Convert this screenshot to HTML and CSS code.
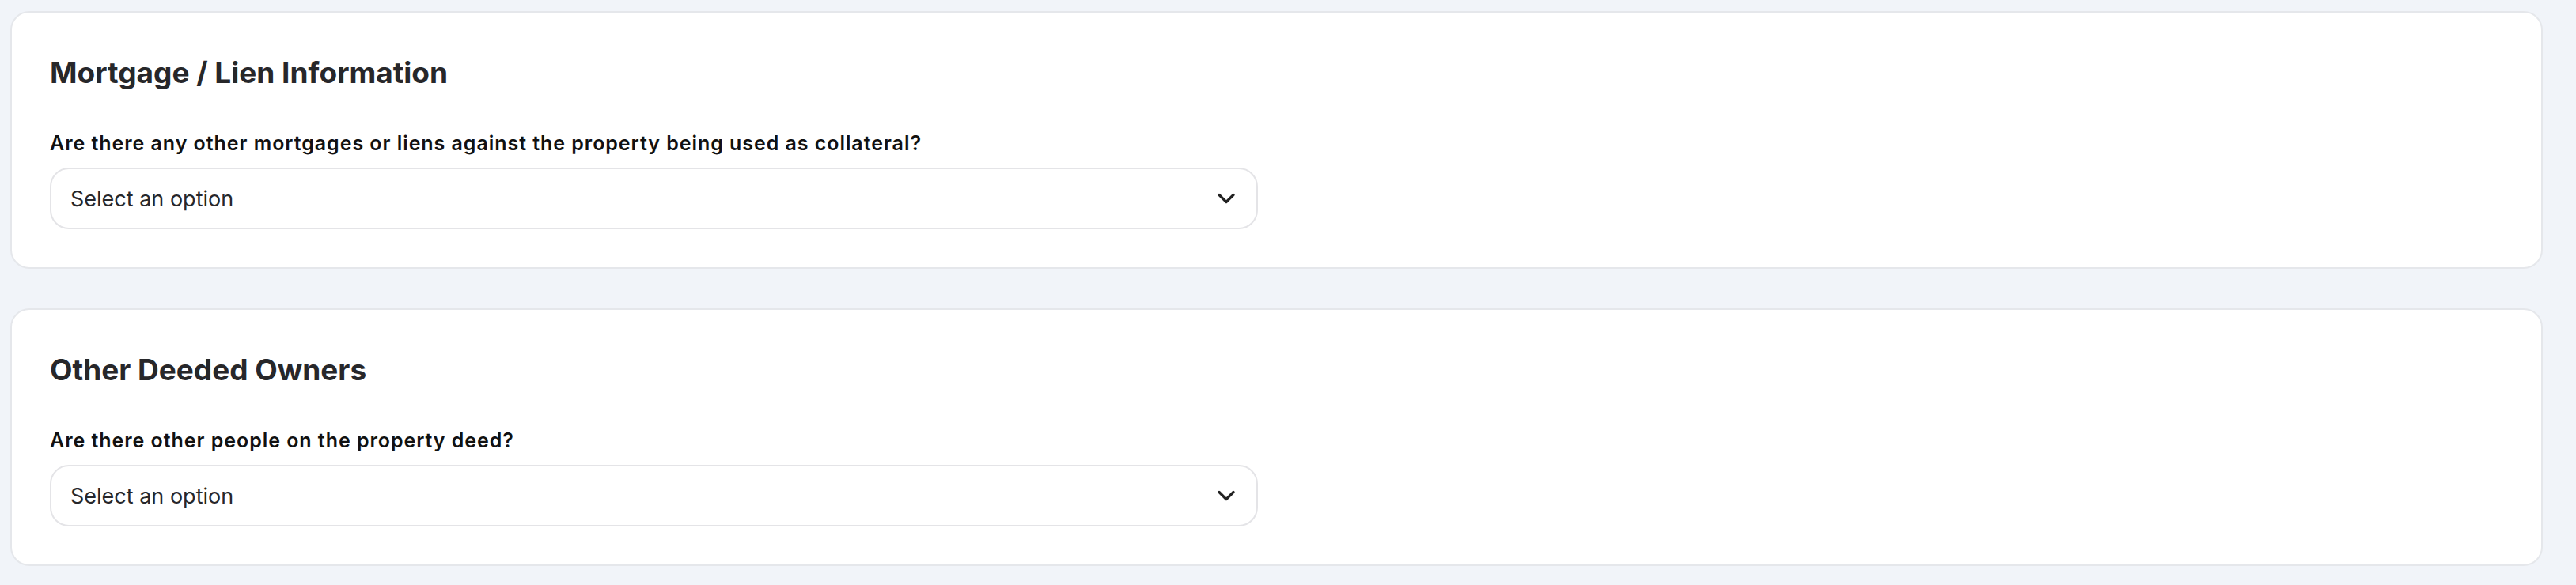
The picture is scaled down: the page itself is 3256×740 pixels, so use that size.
FILE: index.html
```html
<!DOCTYPE html>
<html>
<head>
    <title>Property Details</title>
    <link rel="stylesheet" href="styles.css">
</head>
<body>
    <div class="page">
        <section class="card">
            <h2>Mortgage / Lien Information</h2>
            <div class="form-grid">
                <div class="form-group">
                    <label for="otherLiens">Are there any other mortgages or liens against the property being used as collateral?</label>
                    <div class="select-wrap">
                        <select id="otherLiens">
                            <option value="">Select an option</option>
                            <option value="yes">Yes</option>
                            <option value="no">No</option>
                        </select>
                        <svg class="chevron" viewBox="0 0 24 24" fill="none" stroke="currentColor" stroke-width="2" stroke-linecap="round" stroke-linejoin="round"><path d="m6 9 6 6 6-6"/></svg>
                    </div>
                </div>
            </div>
        </section>

        <section class="card">
            <h2>Other Deeded Owners</h2>
            <div class="form-grid">
                <div class="form-group">
                    <label for="otherOwners">Are there other people on the property deed?</label>
                    <div class="select-wrap">
                        <select id="otherOwners">
                            <option value="">Select an option</option>
                            <option value="yes">Yes</option>
                            <option value="no">No</option>
                        </select>
                        <svg class="chevron" viewBox="0 0 24 24" fill="none" stroke="currentColor" stroke-width="2" stroke-linecap="round" stroke-linejoin="round"><path d="m6 9 6 6 6-6"/></svg>
                    </div>
                </div>
            </div>
        </section>
    </div>
</body>
</html>
```

FILE: styles.css
```css
* {
    box-sizing: border-box;
}
body {
    font-family: Inter, 'Liberation Sans', sans-serif;
    background: #f1f4f9;
    color: #27272a;
    margin: 0;
}
.page {
    display: flex;
    flex-direction: column;
    gap: 50px;
    padding: 14px 42px 16px 13px;
}
.card {
    background: #fff;
    border: 2px solid #e5e7eb;
    border-radius: 24px;
    padding: 48px;
}
.card h2 {
    margin: 5px 0 51px;
    font-size: 37px;
    font-weight: 700;
    color: #27272a;
}
.form-grid {
    display: grid;
    grid-template-columns: 1fr 1fr;
    gap: 48px;
}
label {
    display: block;
    margin-bottom: 15px;
    font-size: 25px;
    line-height: 32px;
    font-weight: 600;
    letter-spacing: 0.95px;
    color: #111;
}
.select-wrap {
    position: relative;
}
select {
    width: 100%;
    height: 78px;
    padding: 0 70px 0 24px;
    background: #fff;
    border: 2px solid #e4e4e7;
    border-radius: 24px;
    font-family: inherit;
    font-size: 27px;
    color: #27272a;
    appearance: none;
    outline: none;
}
.chevron {
    position: absolute;
    right: 22px;
    top: 50%;
    width: 36px;
    height: 36px;
    margin-top: -18px;
    stroke-width: 2.2;
    color: #222;
    pointer-events: none;
}
```
